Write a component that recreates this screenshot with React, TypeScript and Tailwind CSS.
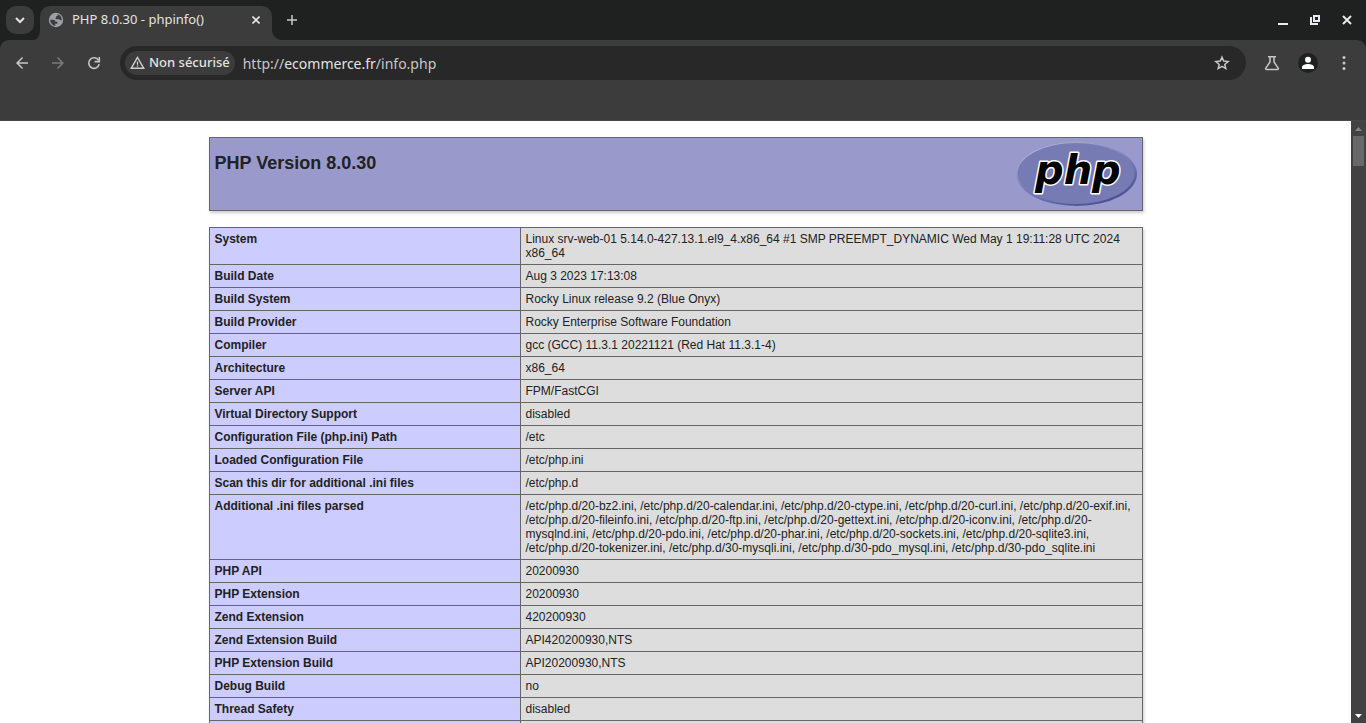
import type { ReactNode } from "react"
import { MdArrowBack, MdArrowForward } from "react-icons/md"

const rows = [
  ["System", "Linux srv-web-01 5.14.0-427.13.1.el9_4.x86_64 #1 SMP PREEMPT_DYNAMIC Wed May 1 19:11:28 UTC 2024 x86_64"],
  ["Build Date", "Aug 3 2023 17:13:08"],
  ["Build System", "Rocky Linux release 9.2 (Blue Onyx)"],
  ["Build Provider", "Rocky Enterprise Software Foundation"],
  ["Compiler", "gcc (GCC) 11.3.1 20221121 (Red Hat 11.3.1-4)"],
  ["Architecture", "x86_64"],
  ["Server API", "FPM/FastCGI"],
  ["Virtual Directory Support", "disabled"],
  ["Configuration File (php.ini) Path", "/etc"],
  ["Loaded Configuration File", "/etc/php.ini"],
  ["Scan this dir for additional .ini files", "/etc/php.d"],
  [
    "Additional .ini files parsed",
    "/etc/php.d/20-bz2.ini, /etc/php.d/20-calendar.ini, /etc/php.d/20-ctype.ini, /etc/php.d/20-curl.ini, /etc/php.d/20-exif.ini, /etc/php.d/20-fileinfo.ini, /etc/php.d/20-ftp.ini, /etc/php.d/20-gettext.ini, /etc/php.d/20-iconv.ini, /etc/php.d/20-mysqlnd.ini, /etc/php.d/20-pdo.ini, /etc/php.d/20-phar.ini, /etc/php.d/20-sockets.ini, /etc/php.d/20-sqlite3.ini, /etc/php.d/20-tokenizer.ini, /etc/php.d/30-mysqli.ini, /etc/php.d/30-pdo_mysql.ini, /etc/php.d/30-pdo_sqlite.ini",
  ],
  ["PHP API", "20200930"],
  ["PHP Extension", "20200930"],
  ["Zend Extension", "420200930"],
  ["Zend Extension Build", "API420200930,NTS"],
  ["PHP Extension Build", "API20200930,NTS"],
  ["Debug Build", "no"],
  ["Thread Safety", "disabled"],
  ["Zend Signal Handling", "enabled"],
]

const IconButton = ({ label, children }: { label: string; children: ReactNode }) => (
  <button aria-label={label} className="flex size-7 shrink-0 items-center justify-center rounded-full">
    {children}
  </button>
)

const GlobeIcon = () => (
  <svg width="16" height="16" viewBox="0 0 16 16" className="shrink-0">
    <circle cx="8" cy="8" r="7.2" fill="#9aa0a6" />
    <path
      d="M2.200 7.800H5.200c1.500 0 2.200.7 2.200 1.900h2v2H7.200v2.200C4.400 13.500 2.200 11 2.200 7.800z"
      fill="#3c3c3c"
    />
    <path
      d="M9.600 2.300C12 3 13.800 5.200 13.900 8c-1 .5-2 .3-2.600-.7H8.900c-1.500 0-1.900-1.700-.6-2.100V4h1.300z"
      fill="#3c3c3c"
    />
  </svg>
)

const TabStrip = () => (
  <div className="flex h-10 shrink-0 items-end bg-[#1f2120]">
    <div className="flex h-10 items-start pt-1.5 pl-1.5">
      <button aria-label="Search tabs" className="flex size-7 items-center justify-center rounded-[10px] bg-[#3c3c3c]">
        <svg width="10" height="10" viewBox="0 0 10 10" fill="none" stroke="#e3e3e3" strokeWidth="2">
          <path d="M1 3l4 4 4-4" />
        </svg>
      </button>
    </div>
    {/* tab with its flared feet */}
    <svg width="6" height="10" viewBox="0 0 6 10" fill="#3c3c3c">
      <path d="M6 0v10H0c4-1 6-5 6-10z" />
    </svg>
    <div className="flex h-[34px] w-[232px] items-center rounded-t-[10px] bg-[#3c3c3c] pr-2 pb-1.5 pl-2">
      <GlobeIcon />
      <span className="ml-2 flex-1 text-[13px] text-[#e3e3e3]">PHP 8.0.30 - phpinfo()</span>
      <button aria-label="Close tab" className="flex size-4 items-center justify-center">
        <svg width="8" height="8" viewBox="0 0 8 8" stroke="#e3e3e3" strokeWidth="1.6">
          <path d="M.5.5l7 7M7.500.5l-7 7" />
        </svg>
      </button>
    </div>
    <svg width="10" height="10" viewBox="0 0 10 10" fill="#3c3c3c">
      <path d="M0 0v10h10C4.500 10 0 5.500 0 0z" />
    </svg>
    <div className="flex h-10 flex-1 items-center justify-between pr-[11px]">
      <button aria-label="New tab" className="flex size-5 items-center justify-center">
        <svg width="10" height="10" viewBox="0 0 10 10" stroke="#c7c7c7" strokeWidth="1.500">
          <path d="M5 0v10M0 5h10" />
        </svg>
      </button>
      <div className="flex items-center gap-4">
        <button aria-label="Minimize" className="flex size-4 items-center justify-center">
          <svg width="12" height="12" viewBox="0 0 12 12" fill="#e8eaed">
            <path d="M1 9h10v2H1z" />
          </svg>
        </button>
        <button aria-label="Restore" className="flex size-4 items-center justify-center">
          <svg width="12" height="12" viewBox="0 0 12 12" fill="#e8eaed">
            <path fillRule="evenodd" d="M4 1h7v7H4zM6 3v3h3V3z" />
            <path d="M1 3h2v6h6v2H1z" />
          </svg>
        </button>
        <button aria-label="Close" className="flex size-4 items-center justify-center">
          <svg width="12" height="12" viewBox="0 0 12 12" stroke="#e8eaed" strokeWidth="2">
            <path d="M2 2l8 8M10 2l-8 8" />
          </svg>
        </button>
      </div>
    </div>
  </div>
)

const Toolbar = () => (
  <div className="shrink-0 bg-[#1f2120]">
    <div className="flex h-[81px] items-start rounded-t-[9px] border-b border-[#484848] bg-[#3c3c3c] px-2 pt-1.5">
      <div className="flex h-[34px] items-center gap-2 text-[#c7c7c7]">
        <IconButton label="Back">
          <MdArrowBack size={18} />
        </IconButton>
        <button aria-label="Forward" disabled className="flex size-7 items-center justify-center text-[#7b7b7b]">
          <MdArrowForward size={18} />
        </button>
        <IconButton label="Reload">
          <svg width="16" height="16" viewBox="0 0 16 16" fill="none" stroke="currentColor" strokeWidth="1.600">
            <path d="M13.200 9.200A5.300 5.300 0 1 1 12.500 5.200" />
            <path d="M13.300 2v4.600H8.700" />
          </svg>
        </IconButton>
      </div>
      <div className="ml-3 flex h-[34px] flex-1 items-center rounded-full bg-[#282828] pr-4 pl-[5px]">
        <button className="flex h-6 items-center gap-1 rounded-full bg-[#3c3c3c] px-[5px] text-[13px] font-medium text-[#e3e3e3]">
          <svg width="15" height="14" viewBox="0 0 15 14" fill="none" stroke="#d0d0d0">
            <path d="M7.500 1.500L13.800 12.300H1.200z" strokeWidth="1.400" />
            <path d="M7.500 5.500v3.200M7.500 9.500v1.300" strokeWidth="1.300" />
          </svg>
          Non sécurisé
        </button>
        <a href="http://ecommerce.fr/info.php" className="ml-2 flex-1 text-[14px] text-[#c7c7c7]">
          http://<span className="text-[#e3e3e3]">ecommerce.fr</span>/info.php
        </a>
        <button aria-label="Bookmark this page" className="flex size-4 items-center justify-center text-[#c7c7c7]">
          <svg width="16" height="16" viewBox="0 0 16 16" fill="none" stroke="currentColor" strokeWidth="1.500">
            <path d="M8 2.200l1.700 3.900 4.400.4-3.300 2.900 1 4.200L8 11.400l-3.800 2.200 1-4.200L1.900 6.500l4.400-.4z" />
          </svg>
        </button>
      </div>
      <div className="ml-3 flex h-[34px] items-center gap-2 text-[#c7c7c7]">
        <IconButton label="Experiments">
          <svg width="16" height="16" viewBox="0 0 16 16" fill="none" stroke="currentColor" strokeWidth="1.500">
            <path d="M4 1.700h8M6 1.700v5.200L1.800 13.200c-.4.600 0 1.200.7 1.200h11c.7 0 1.100-.6.7-1.200L10 6.900V1.700" />
          </svg>
        </IconButton>
        <IconButton label="Profile">
          <svg width="20" height="20" viewBox="0 0 20 20" fill="#fff">
            <circle cx="10" cy="10" r="10" fill="#1f2120" />
            <circle cx="10" cy="6.700" r="3" />
            <path d="M4 16v-1.800c0-2 3.500-3.200 6-3.200s6 1.200 6 3.200V16z" />
          </svg>
        </IconButton>
        <IconButton label="Menu">
          <svg width="16" height="16" viewBox="0 0 16 16" fill="currentColor">
            <circle cx="8" cy="2.500" r="1.500" />
            <circle cx="8" cy="8" r="1.500" />
            <circle cx="8" cy="13.500" r="1.500" />
          </svg>
        </IconButton>
      </div>
    </div>
  </div>
)

const PhpLogo = () => (
  <svg width="121" height="64" viewBox="0 0 121 64" role="img" aria-label="PHP logo" className="float-right">
    <defs>
      <linearGradient id="rim" x1="0.2" y1="0" x2="0.8" y2="1">
        <stop offset="0" stopColor="#b5b8e0" />
        <stop offset="0.45" stopColor="#8084bd" />
        <stop offset="1" stopColor="#45488f" />
      </linearGradient>
    </defs>
    <ellipse cx="60.5" cy="32" rx="60.5" ry="32" fill="url(#rim)" />
    <ellipse cx="60" cy="31.500" rx="58.500" ry="30.500" fill="#777bb3" />
    <text
      x="19"
      y="42"
      className="font-['DejaVu_Sans',sans-serif] text-[40px] font-bold italic"
      fill="#000"
      stroke="#fff"
      strokeWidth="3"
      strokeLinejoin="round"
      paintOrder="stroke"
    >
      php
    </text>
  </svg>
)

const InfoPage = () => (
  <main className="flex-1 overflow-hidden bg-white font-['Liberation_Sans',Arial,sans-serif] text-[#222]">
    <table className="mx-auto mt-4 mb-4 w-[934px] border-collapse shadow-[1px_2px_3px_#ccc]">
      <tbody>
        <tr className="bg-[#9999cc]">
          <td className="border border-[#666] px-[5px] py-1 align-top">
            <PhpLogo />
            <h1 className="mt-3 text-[18px] leading-[18px] font-bold">PHP Version 8.0.30</h1>
          </td>
        </tr>
      </tbody>
    </table>
    <table className="mx-auto w-[934px] border-collapse text-xs leading-[14px] shadow-[1px_2px_3px_#ccc]">
      <tbody>
        {rows.map(([name, value]) => (
          <tr key={name}>
            <th scope="row" className="w-[311px] border border-[#666] bg-[#ccccff] px-[5px] py-1 text-left align-baseline font-bold">
              {name}
            </th>
            <td className="border border-[#666] bg-[#dddddd] px-[5px] py-1 align-baseline">{value}</td>
          </tr>
        ))}
      </tbody>
    </table>
  </main>
)

const Scrollbar = () => (
  <div className="flex w-[15px] shrink-0 flex-col items-center bg-[#424242]">
    <svg width="15" height="15" viewBox="0 0 15 15" fill="#868686">
      <path d="M4 10l3.500-4 3.500 4z" />
    </svg>
    <div className="h-[30px] w-[11px] bg-[#686868]" />
    <svg width="15" height="15" viewBox="0 0 15 15" fill="#fff" className="mt-auto">
      <path d="M4 6h7l-3.500 4z" />
    </svg>
  </div>
)

export default function App() {
  return (
    <div className="flex h-screen flex-col overflow-hidden font-['Noto_Sans',sans-serif]">
      <TabStrip />
      <Toolbar />
      <div className="flex min-h-0 flex-1">
        <InfoPage />
        <Scrollbar />
      </div>
    </div>
  )
}
